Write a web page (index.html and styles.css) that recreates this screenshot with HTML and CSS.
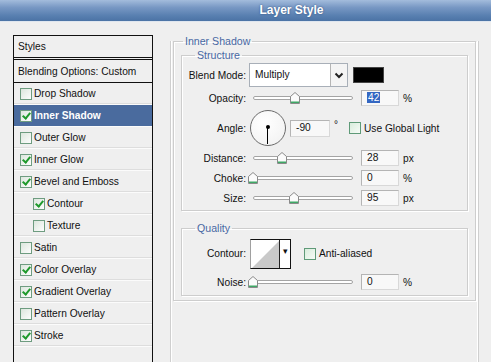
FILE: index.html
```html
<!DOCTYPE html>
<html lang="en">
<head>
  <meta charset="UTF-8" />
  <meta name="viewport" content="width=device-width, initial-scale=1.0"/>
  <title>Layer Style</title>
  <link rel="stylesheet" href="styles.css">
</head>
<body>

  <div class="titlebar">Layer Style</div>

  <div class="dialog">

    <!-- Styles list -->
    <div class="styles-list">
      <div class="list-head">Styles</div>
      <div class="list-row blending">Blending Options: Custom</div>
      <div class="list-row"><span class="check"></span>Drop Shadow</div>
      <div class="list-row active"><span class="check on"></span>Inner Shadow</div>
      <div class="list-row"><span class="check"></span>Outer Glow</div>
      <div class="list-row"><span class="check on"></span>Inner Glow</div>
      <div class="list-row"><span class="check on"></span>Bevel and Emboss</div>
      <div class="list-row sub"><span class="check on"></span>Contour</div>
      <div class="list-row sub"><span class="check"></span>Texture</div>
      <div class="list-row"><span class="check"></span>Satin</div>
      <div class="list-row"><span class="check on"></span>Color Overlay</div>
      <div class="list-row"><span class="check on"></span>Gradient Overlay</div>
      <div class="list-row"><span class="check"></span>Pattern Overlay</div>
      <div class="list-row"><span class="check on"></span>Stroke</div>
    </div>

    <!-- Options pane -->
    <div class="pane">
      <fieldset class="group outer">
        <legend>Inner Shadow</legend>

        <fieldset class="group structure">
          <legend>Structure</legend>

          <div class="row row-blend">
            <div class="lbl">Blend Mode:</div>
            <div class="select">
              <span class="select-text">Multiply</span>
              <span class="select-btn">
                <svg width="10" height="7" viewBox="0 0 10 7"><polyline points="1.5,1.5 5,5 8.5,1.5" fill="none" stroke="#222" stroke-width="2"/></svg>
              </span>
            </div>
            <div class="swatch"></div>
          </div>

          <div class="row row-opacity">
            <div class="lbl">Opacity:</div>
            <div class="slider"><div class="track"></div><span class="thumb" style="left: 42px;"><svg width="10" height="12" viewBox="0 0 10 12"><polygon points="0.5,4.5 5,0.5 9.5,4.5 9.5,11.5 0.5,11.5" fill="#fbfbfb" stroke="#8a8a8a"/><rect x="1" y="9.5" width="8" height="1.5" fill="#3fa866"/></svg></span></div>
            <div class="num"><span class="sel">42</span></div>
            <div class="unit">%</div>
          </div>

          <div class="row row-angle">
            <div class="lbl">Angle:</div>
            <div class="dial"></div>
            <div class="num wide">-90</div>
            <div class="deg">°</div>
            <span class="check light"></span>
            <div class="check-text">Use Global Light</div>
          </div>

          <div class="row">
            <div class="lbl">Distance:</div>
            <div class="slider"><div class="track"></div><span class="thumb" style="left: 29px;"><svg width="10" height="12" viewBox="0 0 10 12"><polygon points="0.5,4.5 5,0.5 9.5,4.5 9.5,11.5 0.5,11.5" fill="#fbfbfb" stroke="#8a8a8a"/><rect x="1" y="9.5" width="8" height="1.5" fill="#3fa866"/></svg></span></div>
            <div class="num">28</div>
            <div class="unit">px</div>
          </div>

          <div class="row">
            <div class="lbl">Choke:</div>
            <div class="slider"><div class="track"></div><span class="thumb" style="left: 0px;"><svg width="10" height="12" viewBox="0 0 10 12"><polygon points="0.5,4.5 5,0.5 9.5,4.5 9.5,11.5 0.5,11.5" fill="#fbfbfb" stroke="#8a8a8a"/><rect x="1" y="9.5" width="8" height="1.5" fill="#3fa866"/></svg></span></div>
            <div class="num">0</div>
            <div class="unit">%</div>
          </div>

          <div class="row">
            <div class="lbl">Size:</div>
            <div class="slider"><div class="track"></div><span class="thumb" style="left: 41px;"><svg width="10" height="12" viewBox="0 0 10 12"><polygon points="0.5,4.5 5,0.5 9.5,4.5 9.5,11.5 0.5,11.5" fill="#fbfbfb" stroke="#8a8a8a"/><rect x="1" y="9.5" width="8" height="1.5" fill="#3fa866"/></svg></span></div>
            <div class="num">95</div>
            <div class="unit">px</div>
          </div>
        </fieldset>

        <fieldset class="group quality">
          <legend>Quality</legend>

          <div class="row row-contour">
            <div class="lbl">Contour:</div>
            <div class="contour">
              <span class="curve">
                <svg width="28" height="27" viewBox="0 0 28 27"><polygon points="1,27 28,0 28,27" fill="#c9c9c9"/></svg>
              </span>
              <span class="curve-btn">▾</span>
            </div>
            <span class="check light"></span>
            <div class="check-text">Anti-aliased</div>
          </div>

          <div class="row row-noise">
            <div class="lbl">Noise:</div>
            <div class="slider"><div class="track"></div><span class="thumb" style="left: 0px;"><svg width="10" height="12" viewBox="0 0 10 12"><polygon points="0.5,4.5 5,0.5 9.5,4.5 9.5,11.5 0.5,11.5" fill="#fbfbfb" stroke="#8a8a8a"/><rect x="1" y="9.5" width="8" height="1.5" fill="#3fa866"/></svg></span></div>
            <div class="num">0</div>
            <div class="unit">%</div>
          </div>
        </fieldset>
      </fieldset>
    </div>

  </div>

</body>
</html>
```

FILE: styles.css
```css
* {
  box-sizing: border-box;
}

body {
  margin: 0;
  background: #efefef;
  font-family: 'Liberation Sans', Arial, sans-serif;
  font-size: 10.2px;
  color: #111;
  overflow: hidden;
  height: 362px;
}

.titlebar {
  height: 22px;
  line-height: 21px;
  padding-left: 92px;
  text-align: center;
  color: #fff;
  font-size: 12px;
  font-weight: bold;
  text-shadow: 0 0 2px #2c4c7c;
  background: linear-gradient(#a3bcdc, #7898c4 35%, #587fb0 75%, #4b73a5);
  border-bottom: 1px solid #dfe6ef;
}

.dialog {
  display: flex;
  align-items: flex-start;
  margin-top: 13px;
}

/* left list */
.styles-list {
  width: 140px;
  height: 327px;
  margin-left: 13px;
  border: 1px solid #111;
  border-bottom: none;
}

.list-head {
  height: 24px;
  line-height: 21px;
  padding-left: 4px;
  border-bottom: 3px double #111;
}

.list-row {
  display: flex;
  align-items: center;
  height: 22px;
  padding-left: 6px;
  border-bottom: 1px solid #fbfbfb;
  box-shadow: inset 0 -1px 0 #dddddd;
}

.list-row.blending {
  height: 23px;
  padding-left: 4px;
  border-bottom: 1px solid #111;
  box-shadow: none;
}

.list-row.sub {
  padding-left: 19px;
}

.list-row.active {
  background: #4a6b9e;
  color: #fff;
  font-weight: bold;
  box-shadow: none;
}

.check {
  position: relative;
  display: inline-block;
  flex: none;
  width: 12px;
  height: 12px;
  margin-right: 2px;
  border: 1px solid #6e9c80;
  background: linear-gradient(135deg, #dce6dd, #fdfdfd);
}

.check.on::after {
  content: "";
  position: absolute;
  left: 3px;
  top: 0px;
  width: 3px;
  height: 6px;
  border-right: 2px solid #1f9a2c;
  border-bottom: 2px solid #1f9a2c;
  transform: rotate(40deg);
}

.check.light {
  background: linear-gradient(135deg, #d8ecdc, #f7fbf7);
  border-color: #5f9a78;
}

/* right pane */
.pane {
  width: 309px;
  height: 321px;
  margin-left: 17px;
  margin-top: 6px;
  border-left: 1px solid #cfcfcf;
  border-right: 1px solid #cfcfcf;
  box-shadow: inset 1px 0 0 #fff, inset -1px 0 0 #fff;
}

.group {
  margin: 0;
  padding: 0;
  min-width: 0;
  border: 1px solid #cdcdcd;
  box-shadow: 1px 1px 0 #fff, inset 1px 1px 0 #fff;
}

.group legend {
  padding: 0 2px;
  margin-left: 13px;
  line-height: 12px;
  color: #4868a3;
  font-size: 10.6px;
}

.group.outer {
  margin: -6px 2px 0 2px;
  padding-bottom: 4px;
}

.group.outer > legend {
  margin-left: 9px;
}

.structure {
  margin: 2px 7px 0 7px;
  padding-bottom: 4px;
}

.quality {
  margin: 11px 7px 0 7px;
  padding-bottom: 5px;
}

.row {
  display: flex;
  align-items: center;
  height: 16px;
  margin-top: 4px;
}

.row-blend {
  height: 24px;
  margin-top: 2px;
}

.row-opacity {
  margin-top: 3px;
}

.row-angle {
  height: 36px;
}

.row-contour {
  height: 29px;
  margin-top: 5px;
}

.row-noise {
  margin-top: 6px;
}

.lbl {
  width: 64px;
  flex: none;
  text-align: right;
}

.select {
  display: flex;
  width: 99px;
  height: 24px;
  margin-left: 3px;
  background: #fff;
  border: 1px solid #a8afb8;
}

.select-text {
  flex: 1;
  padding-left: 5px;
  line-height: 22px;
}

.select-btn {
  display: flex;
  align-items: center;
  justify-content: center;
  width: 17px;
  border-left: 1px solid #b5b5b5;
  background: #f4f4f4;
}

.swatch {
  width: 31px;
  height: 16px;
  margin-left: 5px;
  background: #000;
  border: 1px solid #444;
}

.slider {
  position: relative;
  width: 100px;
  height: 16px;
  margin-left: 7px;
}

.track {
  margin-top: 6px;
  height: 4px;
  background: #fff;
  border: 1px solid #a4a4a4;
  border-radius: 2px;
}

.thumb {
  position: absolute;
  top: 2px;
  margin-left: -5px;
  line-height: 0;
}

.num {
  width: 38px;
  height: 16px;
  margin-left: 8px;
  padding-left: 5px;
  line-height: 14px;
  background: #f8f8f8;
  border: 1px solid #b4b4b4;
  border-right-color: #d8d8d8;
  border-bottom-color: #d8d8d8;
}

.num.wide {
  width: 40px;
  height: 17px;
  margin-left: 4px;
}

.sel {
  background: #3467c2;
  color: #fff;
  padding: 0 1px;
}

.unit {
  margin-left: 4px;
}

.dial {
  position: relative;
  width: 36px;
  height: 36px;
  margin-left: 4px;
  border-radius: 50%;
  border: 1.5px solid #6a6a6a;
  background: radial-gradient(circle at 40% 35%, #ffffff, #f0f0f0);
}

.dial::before {
  content: "";
  position: absolute;
  left: 16px;
  top: 16px;
  width: 1px;
  height: 17px;
  background: #000;
}

.dial::after {
  content: "";
  position: absolute;
  left: 15px;
  top: 14px;
  width: 4px;
  height: 4px;
  border-radius: 50%;
  background: #000;
}

.deg {
  margin-left: 4px;
  margin-right: 11px;
  align-self: flex-start;
  margin-top: 9px;
  font-size: 10px;
}

.check-text {
  margin-left: 1px;
}

.contour {
  display: flex;
  width: 41px;
  height: 30px;
  margin-left: 4px;
  margin-right: 13px;
  background: #fff;
  border: 1px solid #111;
  border-left-color: #a0a0a0;
}

.curve {
  width: 28px;
  line-height: 0;
  padding-top: 1px;
}

.curve-btn {
  flex: 1;
  border-left: 1px solid #222;
  font-size: 9px;
  line-height: 22px;
  text-align: center;
}
```
